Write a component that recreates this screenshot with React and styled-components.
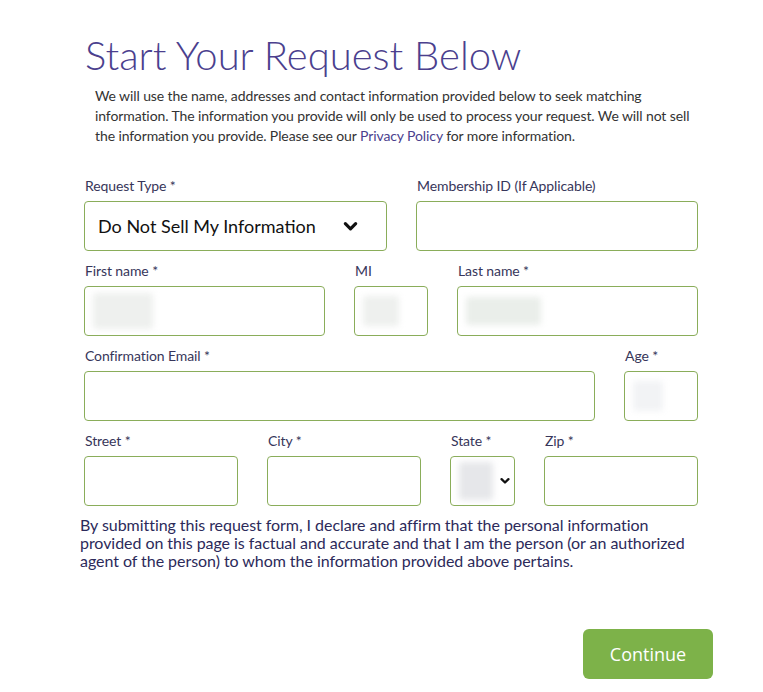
import React from "react";
import styled, { createGlobalStyle } from "styled-components";

const Global = createGlobalStyle`
  html, body { margin: 0; padding: 0; background: #ffffff; }
  body { font-family: Lato, "Open Sans", Arial, sans-serif; }
  * { box-sizing: border-box; }
`;

const Page = styled.div`
  width: 763px;
  padding: 30px 50px 0 80px;
`;

const Title = styled.h1`
  margin: 0 0 0 5px;
  font-family: Lato, sans-serif;
  font-weight: 300;
  font-size: 40px;
  line-height: 50px;
  color: #4b3f8e;
  letter-spacing: 0;
`;

const Intro = styled.p`
  margin: 6px 0 0 15px;
  font-size: 14px;
  line-height: 20px;
  color: #333333;
  width: 610px;
  letter-spacing: -0.1px;
`;

const Link = styled.a`
  color: #4b3f8e;
  text-decoration: none;
`;

const Form = styled.div`
  margin: 20px 0 0 4px;
  width: 614px;
  display: flex;
  flex-direction: column;
`;

const Row = styled.div`
  display: grid;
  grid-template-columns: ${(p) => p.$cols};
  column-gap: 29px;
`;

const Field = styled.div`
  display: flex;
  flex-direction: column;
`;

const Label = styled.label`
  display: block;
  height: 35px;
  padding: 12px 0 0 1px;
  font-size: 14px;
  line-height: 16px;
  color: #37365a;
  letter-spacing: -0.1px;
`;

const Box = styled.div`
  height: 50px;
  border: 1px solid #8aad5a;
  border-radius: 4px;
  background: #fff;
  display: flex;
  align-items: center;
  padding: ${(p) => p.$pad || "0 8px"};
  justify-content: ${(p) => p.$justify || "flex-start"};
`;

const SelectText = styled.span`
  font-size: 18px;
  color: #111;
  flex: 1;
`;

const Redacted = styled.span`
  display: block;
  width: ${(p) => p.$w}px;
  height: ${(p) => p.$h}px;
  background: ${(p) => p.$c || "#eef0ee"};
  filter: blur(3px);
  border-radius: 2px;
`;

const Declaration = styled.p`
  margin: 10px 0 0 0;
  font-size: 16px;
  line-height: 18px;
  color: #2c2a5a;
  width: 625px;
  letter-spacing: -0.05px;
`;

const Actions = styled.div`
  display: flex;
  justify-content: flex-end;
  margin-top: 59px;
`;

const Button = styled.button`
  width: 130px;
  height: 50px;
  border: none;
  border-radius: 6px;
  background: #7db249;
  color: #fff;
  font-family: "Open Sans", Arial, sans-serif;
  font-size: 18px;
  cursor: pointer;
`;

const Chevron = ({ size = 14, stroke = 3.2 }) => (
  <svg width={size} height={size} viewBox="0 0 16 16" aria-hidden="true">
    <path
      d="M2.5 5 L8 10.5 L13.5 5"
      fill="none"
      stroke="#111"
      strokeWidth={stroke}
      strokeLinecap="round"
      strokeLinejoin="round"
    />
  </svg>
);

export default function App() {
  return (
    <>
      <Global />
      <Page>
        <Title>Start Your Request Below</Title>
        <Intro>
          We will use the name, addresses and contact information provided below to seek matching
          information. The information you provide will only be used to process your request. We
          will not sell the information you provide. Please see our <Link href="#">Privacy Policy</Link> for
          more information.
        </Intro>
        <Form>
          <Row $cols="303px 282px">
            <Field>
              <Label>Request Type *</Label>
              <Box $pad="0 28px 0 13px">
                <SelectText>Do Not Sell My Information</SelectText>
                <Chevron size={15} stroke={3.4} />
              </Box>
            </Field>
            <Field>
              <Label>Membership ID (If Applicable)</Label>
              <Box />
            </Field>
          </Row>
          <Row $cols="241px 74px 241px">
            <Field>
              <Label>First name *</Label>
              <Box>
                <Redacted $w={60} $h={36} />
              </Box>
            </Field>
            <Field>
              <Label>MI</Label>
              <Box>
                <Redacted $w={36} $h={30} />
              </Box>
            </Field>
            <Field>
              <Label>Last name *</Label>
              <Box>
                <Redacted $w={75} $h={28} $c="#eaeeea" />
              </Box>
            </Field>
          </Row>
          <Row $cols="511px 74px">
            <Field>
              <Label>Confirmation Email *</Label>
              <Box />
            </Field>
            <Field>
              <Label>Age *</Label>
              <Box>
                <Redacted $w={30} $h={30} $c="#f2f3f5" />
              </Box>
            </Field>
          </Row>
          <Row $cols="154px 154px 65px 154px">
            <Field>
              <Label>Street *</Label>
              <Box />
            </Field>
            <Field>
              <Label>City *</Label>
              <Box />
            </Field>
            <Field>
              <Label>State *</Label>
              <Box $pad="0 4px 0 8px" $justify="space-between">
                <Redacted $w={34} $h={38} $c="#e6e7ea" />
                <Chevron size={10} stroke={3.6} />
              </Box>
            </Field>
            <Field>
              <Label>Zip *</Label>
              <Box />
            </Field>
          </Row>
        </Form>
        <Declaration>
          By submitting this request form, I declare and affirm that the personal information
          provided on this page is factual and accurate and that I am the person (or an authorized
          agent of the person) to whom the information provided above pertains.
        </Declaration>
        <Actions>
          <Button>Continue</Button>
        </Actions>
      </Page>
    </>
  );
}
